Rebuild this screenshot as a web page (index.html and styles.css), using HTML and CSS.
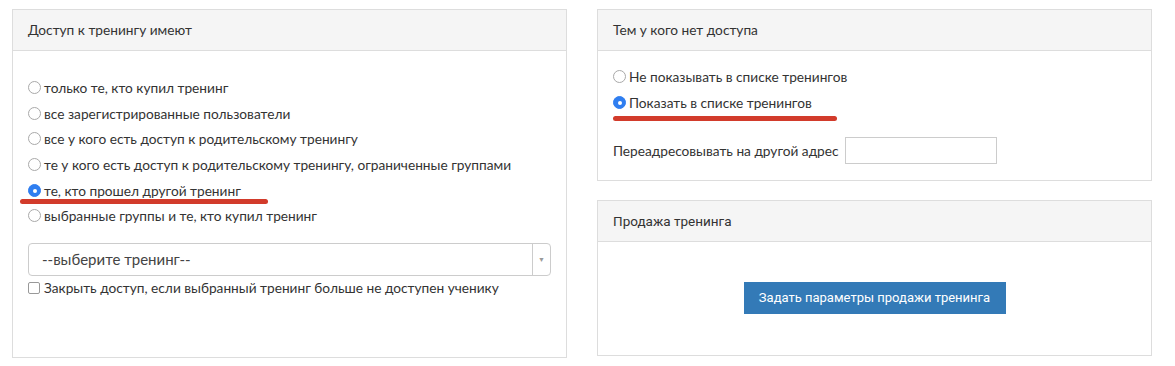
FILE: index.html
```html
<!DOCTYPE html>
<html lang="ru">
<head>
  <meta charset="UTF-8" />
  <title>Доступ к тренингу</title>
  <link rel="stylesheet" href="styles.css">
</head>
<body>
  <div class="layout">
    <div class="panel panel-access">
      <div class="panel-heading">Доступ к тренингу имеют</div>
      <div class="panel-body">
        <div class="options">
          <label class="option"><span class="radio"></span>только те, кто купил тренинг</label>
          <label class="option"><span class="radio"></span>все зарегистрированные пользователи</label>
          <label class="option"><span class="radio"></span>все у кого есть доступ к родительскому тренингу</label>
          <label class="option"><span class="radio"></span>те у кого есть доступ к родительскому тренингу, ограниченные группами</label>
          <label class="option marked"><span class="radio checked"></span>те, кто прошел другой тренинг<span class="mark mark-left"></span></label>
          <label class="option"><span class="radio"></span>выбранные группы и те, кто купил тренинг</label>
        </div>
        <div class="select">
          <span class="select-value">--выберите тренинг--</span>
          <span class="select-arrow">&#9660;</span>
        </div>
        <label class="check"><span class="checkbox"></span>Закрыть доступ, если выбранный тренинг больше не доступен ученику</label>
      </div>
    </div>

    <div class="side">
      <div class="panel panel-noaccess">
        <div class="panel-heading">Тем у кого нет доступа</div>
        <div class="panel-body">
          <label class="option"><span class="radio"></span>Не показывать в списке тренингов</label>
          <label class="option marked"><span class="radio checked"></span>Показать в списке тренингов<span class="mark mark-right"></span></label>
          <div class="redirect">
            <span>Переадресовывать на другой адрес</span>
            <span class="text-input"></span>
          </div>
        </div>
      </div>

      <div class="panel panel-sale">
        <div class="panel-heading">Продажа тренинга</div>
        <div class="panel-body">
          <button class="btn">Задать параметры продажи тренинга</button>
        </div>
      </div>
    </div>
  </div>
</body>
</html>
```

FILE: styles.css
```css
body {
  margin: 0;
  background: #fff;
  color: #333;
  font-family: 'Lato', 'Open Sans', sans-serif;
  font-size: 13.7px;
}
.layout {
  display: grid;
  grid-template-columns: 555px 555px;
  column-gap: 30px;
  padding: 9px 0 0 12px;
  align-items: start;
}
.side {
  display: flex;
  flex-direction: column;
  gap: 19px;
}
.panel {
  border: 1px solid #ddd;
  box-sizing: border-box;
  display: flex;
  flex-direction: column;
}
.panel-heading {
  background: #f5f5f5;
  border-bottom: 1px solid #ddd;
  height: 40px;
  line-height: 40px;
  padding: 0 15px;
  flex: none;
}
.panel-body {
  padding: 0 15px;
  flex: 1;
}
.panel-access { height: 349px; }
.panel-access .panel-body { padding-top: 24px; }
.panel-noaccess { height: 172px; }
.panel-noaccess .panel-body { padding-top: 13px; }
.panel-sale {
  height: 156px;
  font-family: 'Roboto', sans-serif;
}
.panel-sale .panel-heading { font-size: 13.5px; }
.panel-sale .panel-body {
  display: flex;
  align-items: center;
  justify-content: center;
  padding-bottom: 2px;
}

.option {
  display: flex;
  align-items: center;
  height: 25.6px;
  position: relative;
}
.radio {
  width: 11px;
  height: 11px;
  border: 1px solid #a9a9a9;
  border-radius: 50%;
  margin-right: 3px;
  box-sizing: content-box;
  flex: none;
  background: #fff;
}
.radio.checked {
  background: #2f7ef0;
  border-color: #2f7ef0;
  position: relative;
}
.radio.checked::after {
  content: '';
  position: absolute;
  left: 4px;
  top: 4px;
  width: 4px;
  height: 4px;
  border-radius: 50%;
  background: #fff;
}
.mark {
  position: absolute;
  height: 5px;
  border-radius: 3px;
  background: #d23b2b;
}
.mark-left {
  left: -8px;
  top: 22px;
  width: 248px;
}
.mark-right {
  left: 0;
  top: 26px;
  width: 224px;
}

.select {
  margin-top: 14px;
  height: 33px;
  box-sizing: border-box;
  border: 1px solid #ccc;
  border-radius: 4px;
  display: flex;
  align-items: center;
  font-size: 15px;
  color: #444;
}
.select-value {
  flex: 1;
  padding-left: 13px;
}
.select-arrow {
  width: 17px;
  align-self: stretch;
  border-left: 1px solid #ccc;
  font-size: 7px;
  color: #999;
  display: flex;
  align-items: center;
  justify-content: center;
}
.check {
  display: flex;
  align-items: center;
  height: 24px;
}
.checkbox {
  width: 10px;
  height: 10px;
  border: 1px solid #999;
  border-radius: 2px;
  margin-right: 4px;
}

.redirect {
  display: flex;
  align-items: center;
  gap: 6px;
  margin-top: 22px;
}
.text-input {
  width: 150px;
  height: 25px;
  border: 1px solid #ccc;
}

.btn {
  background: #337ab7;
  color: #fff;
  border: none;
  font-family: 'Roboto', sans-serif;
  font-size: 13px;
  width: 262px;
  height: 32px;
  padding: 0;
}
```
